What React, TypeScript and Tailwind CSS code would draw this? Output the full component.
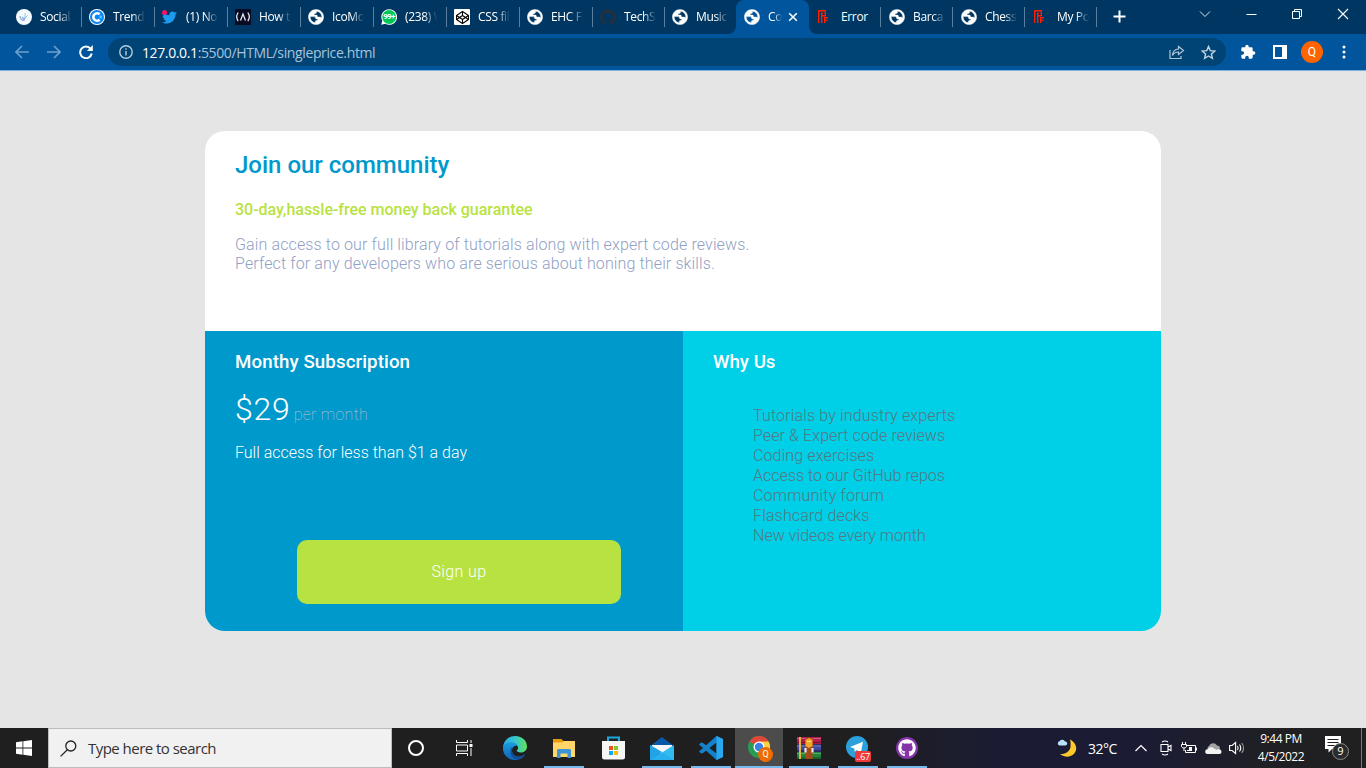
import type { ReactNode } from "react";
import { FaGithub, FaTwitter, FaCodepen } from "react-icons/fa";

function Globe() {
  return (
    <svg width="16" height="16" viewBox="2.500 2.500 19 19">
      <path fill="#fff" stroke="#fff" strokeWidth=".5" d="M12 3C7 3 3 7 3 12s4 9 9 9 9-4 9-9-4-9-9-9zm-.8 15.800C7.700 18.300 5.200 15.500 5.200 12.400c0-.3 0-.6.1-.9h4.400c1 0 1.600.6 1.600 1.500 0 .8.6 1.300 1.400 1.300h1.500c0 1.300-.9 1.900-1.700 1.900-.9 0-1.300.6-1.300 1.300zM18.700 13c-.6-.7-1.200-.9-2-.9h-1.900c-.8 0-1.200-.5-1.200-1.200 0-.8-.5-1.200-1.200-1.200H9.600c0-1.300.8-1.900 1.700-1.900.8 0 1.300-.6 1.300-1.300V5.200c3.600.3 6.300 3.300 6.300 6.800 0 .4-.1.700-.2 1z" />
    </svg>
  );
}

function Pf() {
  return (
    <svg width="16" height="16" viewBox="0 0 16 16" fill="none" stroke="#ff1e00" strokeWidth="1.400">
      <path d="M1.700 14V1.700h6.600v5H4.700M4.700 14V4.300h1.200M7.700 14V8.700h3.300M8 11.400h2.500" />
    </svg>
  );
}

const socialIcon = (
  <svg width="16" height="16" viewBox="0 0 16 16">
    <circle cx="8" cy="8" r="8" fill="#f5fafe" />
    <path d="M4 7c0 3 2 5 5 4M6 8l2 2 2-2" stroke="#93a9dc" strokeWidth="1.300" fill="none" />
    <path d="M9 4v5l3-3" stroke="#8ed7df" fill="none" />
  </svg>
);
const trendIcon = (
  <svg width="16" height="16" viewBox="0 0 16 16">
    <circle cx="8" cy="8" r="8" fill="#fff" />
    <circle cx="8" cy="8" r="7" fill="#0b84f8" />
    <path d="M10.600 5.300A3.700 3.700 0 1 0 10.600 10.700" stroke="#fff" strokeWidth="2.600" fill="none" />
    <path d="M10.500 6.500h2.200v3h-2.200z" fill="#43dbff" />
  </svg>
);
const twitterIcon = (
  <span className="relative block size-4">
    <FaTwitter className="mt-px size-[15px] text-[#1d9bf0]" />
    <span className="absolute left-0 top-0 size-[5px] rounded-full bg-[#f3126b]" />
  </span>
);
const campIcon = (
  <svg width="16" height="16" viewBox="0 0 16 16">
    <path d="M0 0h16v16H0z" fill="#0a0a23" />
    <path d="M3.200 3.500Q.2 8 3.200 12M12.800 3.500q3 4.500 0 8.500M5.500 11.500L8 5l2.500 6.500" stroke="#e7e7ee" strokeWidth="1.300" fill="none" />
  </svg>
);
const whatsIcon = (
  <span className="relative flex size-4 items-center justify-center">
    <svg className="absolute" width="16" height="16" viewBox="0 0 16 16">
      <path d="M8.200.2a7.800 7.800 0 1 1-3.900 14.500L.2 15.800l1.100-4A7.800 7.800 0 0 1 8.200.2z" fill="#fff" />
      <circle cx="8.200" cy="8" r="6.900" fill="#00c853" />
    </svg>
    <span className="relative font-['Roboto',sans-serif] text-[8px] font-bold tracking-[-0.6px] text-white">99+</span>
  </span>
);
const penIcon = (
  <span className="flex size-4 items-center justify-center rounded-[1px] bg-white">
    <FaCodepen className="size-[13px] text-black" />
  </span>
);

const tabs: { label: string; icon: ReactNode; active?: boolean; narrow?: boolean; hideLine?: boolean }[] = [
  { label: "Social ", icon: socialIcon },
  { label: "Trendin", icon: trendIcon },
  { label: "(1) Not", icon: twitterIcon },
  { label: "How to", icon: campIcon },
  { label: "IcoMoo", icon: <Globe /> },
  { label: "(238) W", icon: whatsIcon },
  { label: "CSS filte", icon: penIcon },
  { label: "EHC Fu", icon: <Globe /> },
  { label: "TechSi", icon: <FaGithub className="size-4 text-[#24303c]" />, narrow: true },
  { label: "Music ", icon: <Globe />, narrow: true, hideLine: true },
  { label: "Coo", icon: <Globe />, active: true },
  { label: "Error", icon: <Pf />, narrow: true },
  { label: "Barca ", icon: <Globe />, narrow: true },
  { label: "Chessb", icon: <Globe />, narrow: true },
  { label: "My Po", icon: <Pf />, narrow: true },
];

function TabStrip() {
  return (
    <div className="flex h-[34px] items-stretch bg-[#003762] pl-2 text-white">
      {tabs.map((t, i) =>
        t.active ? (
          <div key={i} className="relative flex w-[73px] items-center rounded-t-lg bg-[#00559c] pl-2">
            <svg className="absolute -left-2 bottom-0" width="8" height="8"><path d="M8 0v8H0a8 8 0 0 0 8-8z" fill="#00559c" /></svg>
            <svg className="absolute -right-2 bottom-0" width="8" height="8"><path d="M0 0v8h8a8 8 0 0 1-8-8z" fill="#00559c" /></svg>
            {t.icon}
            <span className="ml-2 w-[14px] overflow-hidden whitespace-nowrap text-[12px] tracking-[-0.3px] [mask-image:linear-gradient(90deg,#000_45%,transparent)]">{t.label}</span>
            <svg className="ml-[6px]" width="10" height="10" viewBox="0 0 10 10" stroke="#fff" strokeWidth="1.600"><path d="M1.200 1.200l7.600 7.600M8.800 1.200L1.200 8.800" /></svg>
          </div>
        ) : (
          <div key={i} className={`flex items-center pl-2 ${t.narrow ? "w-[72px]" : "w-[73px]"}`}>
            <span className="shrink-0">{t.icon}</span>
            <span className={`ml-2 w-8 shrink-0 overflow-hidden whitespace-pre text-[12px] tracking-[-0.35px] ${t.label === "Error" ? "" : "[mask-image:linear-gradient(90deg,#000_60%,transparent)]"}`}>{t.label}</span>
            <span className={`ml-auto h-5 w-px ${i < 9 ? "-mr-px" : ""} ${t.hideLine ? "" : "bg-[#5b7f9f]"}`} />
          </div>
        )
      )}
      <svg className="ml-4 mt-[10px]" width="13" height="13" viewBox="0 0 13 13" stroke="#fff" strokeWidth="2"><path d="M6.500 .5v12M.5 6.500h12" /></svg>
      <div className="ml-auto flex pr-[17px] pt-2">
        <svg className="mr-[35px]" width="12" height="12" viewBox="0 0 12 12" stroke="#dbe5ee" fill="none"><path d="M1 3.500l5 5 5-5" /></svg>
        <svg className="mr-[35px]" width="11" height="12" viewBox="0 0 11 12" stroke="#fff"><path d="M.5 6.500h10" /></svg>
        <svg className="mr-[34px]" width="11" height="12" viewBox="0 0 11 12" stroke="#fff" fill="none"><path d="M.5 3.500h7v7h-7zM2.500 3V1.500h7v7H8" /></svg>
        <svg width="12" height="12" viewBox="0 0 12 12" stroke="#fff" strokeWidth="1.100"><path d="M1 1l10 10M11 1L1 11" /></svg>
      </div>
    </div>
  );
}

function Toolbar() {
  return (
    <div className="flex h-[37px] items-center border-b border-[#7fb0da] bg-[#00559c]">
      <svg className="ml-[15px]" width="14" height="14" viewBox="0 0 14 14" fill="none" stroke="#6da0cc" strokeWidth="1.600"><path d="M14 7H1.500M7 1L1 7l6 6" /></svg>
      <svg className="ml-[18px]" width="14" height="14" viewBox="0 0 14 14" fill="none" stroke="#6da0cc" strokeWidth="1.600"><path d="M0 7h12.500M7 1l6 6-6 6" /></svg>
      <svg className="ml-[18px]" width="14" height="14" viewBox="0 0 14 14"><path d="M11.600 3.800A5.800 5.800 0 1 0 12.700 8.500" fill="none" stroke="#fff" strokeWidth="2" /><path d="M13.800 0v6H7.900z" fill="#fff" /></svg>
      <div className="ml-[15px] flex h-7 w-[1118px] items-center rounded-full bg-[#004475] pl-[11px]">
        <svg width="14" height="14" viewBox="0 0 14 14" fill="none" stroke="#b8cbdb" strokeWidth="1.400"><circle cx="7" cy="7" r="6.200" /><path d="M7 6v4.500M7 3.300v1.500" /></svg>
        <span className="ml-[9px] whitespace-nowrap text-[14px] tracking-[-0.38px] text-[#a8c3da]"><span className="text-white">127.0.0.1</span>:5500/HTML/singleprice.html</span>
        <svg className="ml-auto" width="16" height="15" viewBox="0 0 16 15" fill="none" stroke="#b3c7d8" strokeWidth="1.200"><path d="M1 5v8.500h11V11M9.500 1.500l5 4-5 4V7C6.500 7 4.800 8 3.500 10.500c.3-4 2.500-6.300 6-6.500z" /></svg>
        <svg className="ml-4 mr-[10px]" width="15" height="15" viewBox="0 0 15 15" fill="none" stroke="#c4d3df" strokeWidth="1.400"><path d="M7.500 1.500l1.800 4.100 4.500.4-3.400 2.900 1 4.400-3.900-2.300-3.900 2.300 1-4.400L1.200 6l4.500-.4z" /></svg>
      </div>
      <svg className="ml-[14px]" width="16" height="16" viewBox="0 0 24 24" fill="#fff"><path d="M20.500 11H19V7a2 2 0 0 0-2-2h-4V3.500a2.500 2.500 0 0 0-5 0V5H4a2 2 0 0 0-2 2v3.800h1.500a2.700 2.700 0 0 1 0 5.400H2V20c0 1.100.9 2 2 2h3.800v-1.500a2.700 2.700 0 0 1 5.400 0V22H17a2 2 0 0 0 2-2v-4h1.500a2.500 2.500 0 0 0 0-5z" /></svg>
      <svg className="ml-[17px]" width="14" height="14" viewBox="0 0 14 14"><path d="M1 1h12v12H1z" fill="none" stroke="#fff" strokeWidth="2" /><path d="M9 1h4v12H9z" fill="#fff" /></svg>
      <span className="ml-[14px] flex size-[22px] items-center justify-center rounded-full bg-[#ff6400] font-['Roboto',sans-serif] text-[12px] text-white">Q</span>
      <svg className="ml-[19px]" width="4" height="14" viewBox="0 0 4 14" fill="#fff"><circle cx="2" cy="2" r="1.500" /><circle cx="2" cy="7" r="1.500" /><circle cx="2" cy="12" r="1.500" /></svg>
    </div>
  );
}

const features = [
  { text: "Tutorials by industry experts", tracking: "tracking-[0.16px]" },
  { text: "Peer & Expert code reviews", tracking: "tracking-[0.1px]" },
  { text: "Coding exercises", tracking: "tracking-[0.13px]" },
  { text: "Access to our GitHub repos", tracking: "tracking-normal" },
  { text: "Community forum", tracking: "tracking-[0.2px]" },
  { text: "Flashcard decks", tracking: "tracking-[0.15px]" },
  { text: "New videos every month", tracking: "tracking-[0.04px]" },
];

function Page() {
  return (
    <main className="flex h-[657px] justify-center bg-[#e5e5e5] pt-[60px] font-['Roboto',sans-serif]">
      <div className="h-[500px] w-[956px] overflow-hidden rounded-[20px] bg-white">
        <section className="h-[200px] px-[30px] pt-5">
          <h1 className="text-[24px] font-medium leading-[29px] text-[#0099cc]">Join our community</h1>
          <h2 className="mt-5 text-[16px] font-medium leading-[19px] tracking-[-0.02px] text-[#b8e242]">30-day,hassle-free money back guarantee</h2>
          <p className="mt-4 whitespace-nowrap text-[16px] font-light leading-[19px] tracking-[0.125px] text-[#91a0c4]">
            Gain access to our full library of tutorials along with expert code reviews.
            <br />
            Perfect for any developers who are serious about honing their skills.
          </p>
        </section>
        <div className="grid h-[300px] grid-cols-2">
          <section className="bg-[#0099cc] px-[30px] pt-5 text-white">
            <h3 className="text-[18.7px] font-medium leading-[22px] tracking-[0.1px]">Monthy Subscription</h3>
            <p className="mt-[17px] flex h-[38px] items-baseline leading-[38px]">
              <span className="text-[32px] font-light tracking-[0.8px]">$29</span>
              <span className="ml-[3px] text-[16px] font-thin tracking-[0.3px] text-[#c3c0cd]">per month</span>
            </p>
            <p className="mt-[15px] text-[16px] font-light leading-[19px]">Full access for less than $1 a day</p>
            <button className="ml-[62px] mt-[78px] block h-16 w-[324px] max-w-none rounded-[10px] bg-[#b8e242] text-[16px] font-light tracking-[0.4px]">Sign up</button>
          </section>
          <section className="bg-[#00cfe8] px-[30px] pt-5">
            <h3 className="text-[18.7px] font-medium leading-[22px] text-white">Why Us</h3>
            <ul className="mt-[33px] pl-10 text-[16px] font-light leading-5 text-[#56777f]">
              {features.map((f) => (
                <li key={f.text} className={f.tracking}>{f.text}</li>
              ))}
            </ul>
          </section>
        </div>
      </div>
    </main>
  );
}

function AppCell({ children, line, active }: { children: ReactNode; line?: boolean; active?: boolean }) {
  return (
    <div className="relative flex w-[49px] items-center justify-center pl-px">
      {active && <span className="absolute inset-y-0 left-0 right-px bg-[#4c4c4c]" />}
      <span className="relative">{children}</span>
      {line && <span className={`absolute bottom-0 h-[2px] bg-[#76b9ed] ${active ? "left-0 right-px" : "left-[5px] w-10"}`} />}
    </div>
  );
}

function Taskbar() {
  return (
    <div className="flex h-10 items-stretch bg-[linear-gradient(90deg,#1f1f1f_0%,#1f1f1f_62%,#1b1c33_73%,#1b1c33_84%,#202023_94%,#202020_100%)] text-white">
      <div className="flex w-12 items-center justify-center">
        <svg width="16" height="16" viewBox="0 0 16 16" fill="#fff"><path d="M0 2.200L6.500 1.300v6.300H0zM7.300 1.200L16 0v7.600H7.300zM0 8.400h6.500v6.300L0 13.800zM7.300 8.400H16V16l-8.700-1.200z" /></svg>
      </div>
      <div className="flex w-[344px] items-center border border-[#bdbdbd] bg-[#f1f1f1] pl-[11px]">
        <svg width="17" height="17" viewBox="0 0 17 17" fill="none" stroke="#222" strokeWidth="1.300"><circle cx="10.800" cy="6" r="5" /><path d="M7.300 9.700L.6 16.400" /></svg>
        <span className="ml-[11px] text-[15px] tracking-[-0.53px] text-[#333]">Type here to search</span>
      </div>
      <div className="flex w-12 items-center justify-center"><span className="size-4 rounded-full border-2 border-white" /></div>
      <div className="mr-px flex w-[49px] items-center justify-center pr-px">
        <svg width="17" height="16" viewBox="0 0 17 16" fill="none" stroke="#fff"><path d="M.5 0v2.500h11V0M.5 5h11v6H.5zM.5 16v-2.500h11V16M15 0v3M15 8v8" /><path d="M13.500 4h3v3h-3z" fill="#fff" stroke="none" /></svg>
      </div>
      <AppCell>
        <svg width="24" height="24" viewBox="0 0 24 24">
          <defs>
            <linearGradient id="edgeA" x1="0" x2="1"><stop stopColor="#2aa9e8" /><stop offset=".5" stopColor="#33c6cf" /><stop offset="1" stopColor="#63e05c" /></linearGradient>
            <linearGradient id="edgeB" x1="0" y1="0" x2="0" y2="1"><stop stopColor="#1b9de2" /><stop offset="1" stopColor="#1062b8" /></linearGradient>
          </defs>
          <path d="M0 12C.3 5 5.500 0 12.200 0 19.500 0 24 5.300 24 10.400c0 3.500-2.600 6-6 6-3 0-4.500-1-4.300-2 1-.8 1.500-1.800 1.300-3.200C14.500 8.500 11.500 7 8 7c-4 0-7 2-8 5z" fill="url(#edgeA)" />
          <path d="M0 12c.5-3.500 4-5.800 7.500-5.800 4 0 6.300 1.800 7.300 3.800-3-.9-5.800 1-5.800 4.500 0 4 3.500 6.500 7.500 6 2.500-.2 4.500-1.300 5.700-2.500C20.500 21.500 17 24 12 24 5 24-.3 18.500 0 12z" fill="url(#edgeB)" />
          <path d="M9.500 10.500C7 12.500 6.500 18 9.500 21c1.800 2 4.500 3 6.500 2.300 2.500-.6 5-2.800 6.200-5.300-1.200 1.200-3.200 2.300-5.700 2.500-4 .5-7.500-2-7.500-6 0-1.600.2-3 .5-4z" fill="#124f96" />
        </svg>
      </AppCell>
      <AppCell line>
        <svg width="22" height="19" viewBox="0 0 22 19"><path d="M0 0h8.500l1.700 2H22v4H0z" fill="#e59d0b" /><path d="M0 3.500h9L10.500 2H22v16H0z" fill="#ffd667" /><path d="M4 19v-7.500c0-1 .5-1.500 1.500-1.500h11c1 0 1.500.5 1.500 1.500V19h-3.500v-4.500h-7V19z" fill="#3c93d6" /></svg>
      </AppCell>
      <AppCell>
        <svg width="23" height="24" viewBox="0 0 23 24"><path d="M6 6V1.500h11V6" fill="none" stroke="#1ba8e2" strokeWidth="2" /><path d="M0 5h23v16a2.500 2.500 0 0 1-2.500 2.500h-18A2.500 2.500 0 0 1 0 21z" fill="#f6f6f6" /><path d="M7 10h4v4H7z" fill="#f1511b" /><path d="M12 10h4v4h-4z" fill="#80cc28" /><path d="M7 15h4v4H7z" fill="#00adef" /><path d="M12 15h4v4h-4z" fill="#fbbc09" /></svg>
      </AppCell>
      <AppCell line>
        <svg width="24" height="23" viewBox="0 0 24 23"><path d="M0 9l12-9 12 9v13H0z" fill="#0758a9" /><path d="M2 8h20v9H2z" fill="#f5f7fa" /><path d="M0 8l12 7L0 23z" fill="#1a9ce3" /><path d="M24 8L0 23h24z" fill="#30bcf1" /><path d="M0 8l12 7.500L24 23H0z" fill="#25a9ea" opacity=".65" /></svg>
      </AppCell>
      <AppCell line>
        <svg width="24" height="24" viewBox="0 0 24 24"><path d="M17.500 0L24 3v18l-6.500 3L3.300 11.200 1 9.400 0 8.500 2 6.600 4 7l13.500 10.500V6.500L4 17l-2 .5-2-1.900z" fill="#1382cb" /><path d="M17.500 0L24 3v18l-6.500 3z" fill="#29a7ef" /></svg>
      </AppCell>
      <AppCell line active>
        <span className="relative block size-6">
          <svg width="22" height="22" viewBox="0 0 24 24"><circle cx="12" cy="12" r="12" fill="#269d52" /><path d="M12 12L1.600 6A12 12 0 0 1 22.400 6z" fill="#df4738" /><path d="M12 6h10.400A12 12 0 0 1 12 24l5.200-9z" fill="#ffd046" /><circle cx="12" cy="12" r="6" fill="#fff" /><circle cx="12" cy="12" r="4.600" fill="#3b82e8" /></svg>
          <span className="absolute -bottom-[2px] -right-[1px] flex size-[15px] items-center justify-center rounded-full bg-[#ef6c00] font-['Roboto',sans-serif] text-[9px] text-white">Q</span>
        </span>
      </AppCell>
      <AppCell line>
        <svg width="24" height="22" viewBox="0 0 24 22"><path d="M0 0h24v7H0z" fill="#b81d50" /><path d="M0 7.500h24v7H0z" fill="#4049a4" /><path d="M0 15h24v7H0z" fill="#23843c" /><path d="M0 1.500h24M0 9h24M0 16.500h24" stroke="#ffffff44" /><path d="M0 5.500h24M0 13.500h24M0 21h24" stroke="#00000055" strokeWidth="1.500" /><path d="M2 0h2v22H2z" fill="#e0b642" /><path d="M8.500 1h7v21h-7z" fill="#a84a17" /><path d="M8.500 3L12 1l3.500 2v6L12 11 8.500 9z" fill="#f4a623" /><path d="M8.500 11v4.500M15.500 11v4.500" stroke="#e7e7e7" strokeWidth="2.200" /><path d="M10 4.500h4" stroke="#ffe08a" /></svg>
      </AppCell>
      <AppCell line>
        <span className="relative block size-6">
          <svg width="22" height="22" viewBox="0 0 22 22"><circle cx="11" cy="11" r="11" fill="#2ba0db" /><path d="M4 11l13-5.200-2.200 11.200-4-3-2 2-.5-3.500z" fill="#fff" /></svg>
          <span className="absolute -bottom-[2px] left-[9px] flex h-[11px] w-4 items-center justify-center rounded-[2px] bg-[#ef3a38] text-[9px] leading-none tracking-[-0.4px] text-white">..67</span>
        </span>
      </AppCell>
      <AppCell line>
        <span className="flex size-[22px] items-center justify-center rounded-full bg-[#8534a8]"><FaGithub className="size-[18px] text-white" /></span>
      </AppCell>
      <div className="ml-auto flex items-center">
        <svg width="20" height="20" viewBox="0 0 20 20"><path d="M13 1.500C18 4 20.500 9 18.500 13.500 16 19 9 20.500 3 16c5 .5 10-2.500 10.500-7 .2-3 .2-5-.5-7.500z" fill="#ffc929" /><path d="M2.500 7.500a2.300 2.300 0 0 1 .3-4.500A3 3 0 0 1 8 3.500a2 2 0 0 1 .5 4z" fill="#b9e2fa" /></svg>
        <span className="ml-[11px] w-[30px] whitespace-nowrap text-[14px] tracking-[-0.5px]">32°C</span>
        <svg className="ml-[17px]" width="12" height="8" viewBox="0 0 12 8" fill="none" stroke="#fff" strokeWidth="1.200"><path d="M.5 7L6 1.500 11.500 7" /></svg>
        <svg className="ml-[13px]" width="12" height="16" viewBox="0 0 12 16" fill="none" stroke="#fff" strokeWidth="1.100"><path d="M1 4.500h7v7H1zM8 7l3-1.500v5L8 9M2 2Q5 0 8 2M2 14q3 2 6 0" /></svg>
        <svg className="ml-[9px]" width="16" height="12" viewBox="0 0 16 12" fill="none" stroke="#fff"><path d="M6 3.500h8.500v7H4.500V8M15.500 5.500v3M1.500 0v2M4.500 0v2M.5 2.500h5v2Q5 6 3 6T.5 4.500zM3 6v3" /><path d="M8 5h3v4H6V8h2z" fill="#fff" stroke="none" /></svg>
        <svg className="ml-2" width="17" height="11" viewBox="0 0 17 11"><path d="M3 7a3 3 0 0 1 1-4 4.500 4.500 0 0 1 8-.5 3 3 0 0 1 3 3L9 8z" fill="#a3a3a3" /><path d="M2.500 11a2.300 2.300 0 0 1 0-4.700A4 4 0 0 1 9 5.500l2.500 1.200A3 3 0 0 1 16.500 9q0 2-2 2z" fill="#f2f2f2" /></svg>
        <svg className="ml-[7px]" width="17" height="14" viewBox="0 0 17 14" fill="none" stroke="#fff" strokeWidth="1.100"><path d="M.6 4.500h2.500l3.500-3v11l-3.500-3H.6zM8.500 5q1.400 2 0 4M10.500 3.500q2.500 3.500 0 7" /><path d="M12.800 2q3.500 5 0 10" stroke="#999" /></svg>
        <div className="ml-[7px] flex w-[56px] flex-col items-center whitespace-nowrap text-[12px] leading-[18px] tracking-[-0.45px]">
          <span>9:44 PM</span>
          <span>4/5/2022</span>
        </div>
        <div className="relative ml-4 h-6 w-[25px]">
          <svg width="16" height="17" viewBox="0 0 16 17"><path d="M0 0h16v13H7l-3.500 3.500V13H0z" fill="#fff" /><path d="M2.500 3.500h11M2.500 6.500h11M2.500 9.500h7" stroke="#202020" /></svg>
          <span className="absolute left-[7px] top-[7px] flex size-[17px] items-center justify-center rounded-full border border-[#8a8a8a] bg-[#2b2b2b] text-[11px]">9</span>
        </div>
        <span className="ml-[11px] mr-1 h-10 w-px bg-[#777]" />
      </div>
    </div>
  );
}

export default function App() {
  return (
    <div className="h-[768px] w-[1366px] overflow-hidden bg-[#e5e5e5] font-['Open_Sans','Noto_Sans',sans-serif]">
      <TabStrip />
      <Toolbar />
      <Page />
      <Taskbar />
    </div>
  );
}
